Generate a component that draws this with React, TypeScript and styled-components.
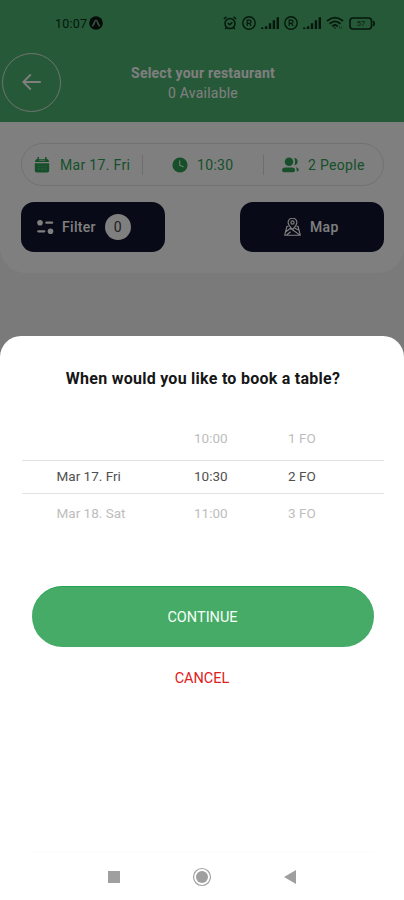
import React from 'react';
import styled, { createGlobalStyle } from 'styled-components';

const GlobalStyle = createGlobalStyle`
  * { box-sizing: border-box; }
  body { margin: 0; background: #fff; font-family: Roboto, "Liberation Sans", sans-serif; }
  button { font: inherit; border: 0; padding: 0; }
  svg { display: block; flex: none; }
`;

const Screen = styled.main`
  position: relative;
  width: 404px;
  height: 900px;
  overflow: hidden;
  background: #f4f4f4;
`;

const Header = styled.header`
  height: 122px;
  background: #4cb270;
`;

const StatusBar = styled.div`
  display: flex;
  align-items: center;
  justify-content: space-between;
  height: 46px;
  padding: 0 28px 0 55px;
  color: #0b2f18;
`;

const Clock = styled.div`
  display: flex;
  align-items: center;
  gap: 2px;
  font-size: 12.5px;
  letter-spacing: 0.2px;
`;

const StatusIcons = styled.div`
  display: flex;
  align-items: center;
  gap: 5px;
`;

const TitleRow = styled.div`
  display: grid;
  grid-template-columns: 58px 1fr 58px;
  align-items: center;
  height: 74px;
  padding: 0 0 2px 2px;
`;

const BackButton = styled.button`
  display: flex;
  align-items: center;
  justify-content: center;
  width: 59px;
  height: 59px;
  border: 1px solid #dcebdc;
  border-radius: 50%;
  background: transparent;
  color: #fff;
`;

const Heading = styled.div`
  display: flex;
  flex-direction: column;
  align-items: center;
  color: #fff;
  font-size: 14px;
  line-height: 20px;
  letter-spacing: 0.22px;
  white-space: nowrap;
`;

const Title = styled.h1`
  margin: 2px 0 0;
  font-size: 14px;
  font-weight: 700;
  line-height: 20px;
`;

const SearchCard = styled.section`
  display: flex;
  flex-direction: column;
  gap: 16px;
  height: 151px;
  padding: 21px 20px 0 21px;
  border-radius: 0 0 26px 26px;
  background: #fff;
`;

const Criteria = styled.div`
  display: flex;
  align-items: center;
  height: 43px;
  border: 1px solid #e2e2e2;
  border-radius: 22px;
  color: #2c9f55;
`;

const Criterion = styled.div<{ $width: number; $inset: number; $gap: number }>`
  display: flex;
  align-items: center;
  gap: ${(p) => p.$gap}px;
  width: ${(p) => p.$width}px;
  height: 20px;
  padding-left: ${(p) => p.$inset}px;
  font-size: 14px;
  letter-spacing: 0.32px;
  white-space: nowrap;
  & + & { border-left: 1px solid #dcdcdc; }
`;

const Actions = styled.div`
  display: flex;
  justify-content: space-between;
`;

const ActionButton = styled.button<{ $inset: number; $gap: number }>`
  display: flex;
  align-items: center;
  gap: ${(p) => p.$gap}px;
  width: 144px;
  height: 50px;
  padding-left: ${(p) => p.$inset}px;
  border-radius: 13px;
  background: #12142e;
  color: #fff;
  font-size: 14px;
  font-weight: 500;
  letter-spacing: 0.3px;
`;

const Count = styled.span`
  display: flex;
  align-items: center;
  justify-content: center;
  width: 26px;
  height: 26px;
  margin-left: 1px;
  border-radius: 50%;
  background: #fff;
  color: #444;
  font-weight: 400;
`;

const Scrim = styled.div`
  position: absolute;
  inset: 0;
  background: rgba(0, 0, 0, 0.5);
`;

const Sheet = styled.section`
  position: absolute;
  inset: 336px 0 0;
  display: flex;
  flex-direction: column;
  align-items: center;
  border-radius: 21px 21px 0 0;
  background: #fff;
`;

const Question = styled.h2`
  margin: 33px 0 33px 2px;
  color: #161616;
  font-size: 16px;
  font-weight: 700;
  line-height: 20px;
  letter-spacing: 0.26px;
  white-space: nowrap;
`;

const Picker = styled.div`
  display: flex;
  flex-direction: column;
  width: 362px;
  margin-left: 1px;
`;

const PickerRow = styled.div<{ $selected?: boolean }>`
  display: grid;
  grid-template-columns: 137.5px 94px 1fr;
  align-items: center;
  height: ${(p) => (p.$selected ? 34 : 38)}px;
  padding-left: 35px;
  padding-bottom: ${(p) => (p.$selected ? 3 : 0)}px;
  border: solid #e2e2e2;
  border-width: ${(p) => (p.$selected ? '1px 0' : '0')};
  color: ${(p) => (p.$selected ? '#505050' : '#bdbdbd')};
  font-size: 13.5px;
  white-space: nowrap;
  &:first-child { padding-bottom: 6px; }
`;

const ContinueButton = styled.button`
  width: 342px;
  height: 61px;
  margin-top: 54px;
  margin-left: 1px;
  border-radius: 31px;
  background: #47ab68;
  border-top: 1px solid #22a253;
  color: #f5fff7;
  font-size: 14.5px;
`;

const CancelButton = styled.button`
  margin-top: 22px;
  background: transparent;
  color: #df2020;
  font-size: 14.5px;
  line-height: 20px;
`;

const NavigationBar = styled.nav`
  display: flex;
  justify-content: space-between;
  align-items: center;
  width: 342px;
  height: 48px;
  margin-top: auto;
  padding: 0 77px;
  border-top: 1px solid #fcfcfc;
`;

function AppBadge() {
  return (
    <svg width="14" height="14" viewBox="0 0 14 14">
      <circle cx="7" cy="7" r="6.8" fill="#06180c" />
      <path d="M3.7 9.7C5.2 8.1 5.5 4.3 7 4.3s1.8 3.8 3.3 5.4" fill="none" stroke="#78a282" strokeWidth="1.6" strokeLinecap="round" />
    </svg>
  );
}

function Alarm() {
  return (
    <svg width="14" height="14" viewBox="0 0 14 14" fill="none" stroke="currentColor" strokeWidth="1.5">
      <circle cx="7" cy="7.6" r="5" />
      <path d="M.8 3 3.5.9M13.2 3 10.5.9M4.8 7.1l2 1.7 2.6-2.5M3.2 11.8l-1 1.3M10.8 11.8l1 1.3" />
    </svg>
  );
}

function Registered() {
  return (
    <svg width="14" height="14" viewBox="0 0 14 14" fill="none" stroke="currentColor">
      <circle cx="7" cy="7" r="6.2" strokeWidth="1.4" />
      <path d="M5.2 10V4.2h2.1q1.8 0 1.8 1.5T7.3 7.3H5.2m2.2 0L9.2 10" strokeWidth="1.2" />
    </svg>
  );
}

function Signal() {
  return (
    <svg width="18" height="12" viewBox="0 0 18 12" stroke="currentColor" strokeWidth="2.4">
      <path d="M1.2 12v-1.5M5.1 12V9.3M9 12V6.3M12.9 12V3.3M16.8 12V.3" />
    </svg>
  );
}

function Wifi() {
  return (
    <svg width="18" height="14" viewBox="0 0 18 14" fill="none" stroke="currentColor" strokeWidth="1.8">
      <path d="M1 5Q9-1.8 17 5M3.6 7.7q5.4-4.6 10.8 0M6.2 10.3q2.8-2.5 5.6 0" />
      <path d="m7.5 11.5 1.5 1.6 1.4-1.6z" fill="currentColor" stroke="none" />
      <path d="M13.5 10.5v2.2M15.5 10.5v2.2" strokeWidth=".8" opacity=".7" />
    </svg>
  );
}

function Battery() {
  return (
    <svg width="27" height="13" viewBox="0 0 27 13">
      <rect x="1" y="1" width="21.5" height="11" rx="3" fill="none" stroke="currentColor" strokeWidth="1.6" />
      <path d="M24 4q2.4 2.4 0 5" fill="none" stroke="currentColor" strokeWidth="1.7" />
      <text x="12" y="9.2" textAnchor="middle" fontSize="7.5" fontWeight="500" fill="currentColor" opacity=".75">57</text>
    </svg>
  );
}

function BackArrow() {
  return (
    <svg width="20" height="18" viewBox="0 0 20 18" fill="none" stroke="currentColor" strokeWidth="1.8">
      <path d="M18.8 9H.8M8.8 1.5 1.3 9l7.5 7.5" />
    </svg>
  );
}

function CalendarIcon() {
  return (
    <svg width="16" height="16" viewBox="0 0 16 16" fill="currentColor">
      <path d="M.8 6.2h14.4v7.2a2 2 0 0 1-2 2H2.8a2 2 0 0 1-2-2zM1 5q0-3 2.5-3h9Q15 2 15 5z" />
      <path d="M4.2.5v3M11.8.5v3" stroke="currentColor" strokeWidth="1.5" strokeLinecap="round" />
      <path d="M5.2 3.2h5.6" stroke="#b9e3c6" strokeWidth="1.2" />
      <path d="M4 9.3h1.6M7.2 9.3h1.6M10.4 9.3H12M4 12h1.6M7.2 12h1.6M10.4 12H12" stroke="#6dbf89" strokeWidth="1" />
    </svg>
  );
}

function TimeIcon() {
  return (
    <svg width="16" height="16" viewBox="0 0 16 16">
      <circle cx="8" cy="8" r="7.6" fill="currentColor" />
      <path d="M7.7 4v4.3l3.4 1.4" fill="none" stroke="#c7edd2" strokeWidth="1.3" strokeLinecap="round" />
    </svg>
  );
}

function PeopleIcon() {
  return (
    <svg width="17" height="16" viewBox="0 0 17 16" fill="currentColor">
      <circle cx="7" cy="4.7" r="4.3" />
      <path d="M0 13q0-2.6 3.5-2.6h6.2q3.4 0 3.4 2.6 0 2.2-2 2.2H2Q0 15.2 0 13M12 1q3.7.4 3.7 3.6 0 3.2-3.4 3.8 1.8-3.7-.3-7.4M13.8 10.2q3 .7 3 2.9 0 1.4-2.1 1.5.4-2.7-.9-4.4" />
    </svg>
  );
}

function FilterIcon() {
  return (
    <svg width="17" height="16" viewBox="0 0 17 16" fill="none" stroke="currentColor" strokeWidth="2.3" strokeLinecap="round">
      <circle cx="3" cy="3.7" r="2.8" fill="currentColor" stroke="none" />
      <path d="M9.4 3.7h5.7M1.3 12.3h6" />
      <circle cx="13.5" cy="12.3" r="2.8" fill="currentColor" stroke="none" />
    </svg>
  );
}

function MapIcon() {
  return (
    <svg width="17" height="18" viewBox="0 0 17 18" fill="none" stroke="currentColor" strokeWidth="1.15" strokeLinejoin="round">
      <path d="M8.5 11.7C6 8.5 4.1 6.8 4.1 4.5a4.4 4.4 0 0 1 8.8 0c0 2.3-1.9 4-4.4 7.2Z" />
      <circle cx="8.5" cy="4.5" r="1.6" />
      <path d="M4.6 8.2H3L.7 17.2h15.6L14 8.2h-1.6M1.5 14l5-3.8 9.1 6.7M10.5 10l4.3 2M2.6 17l4-3.3" />
    </svg>
  );
}

const slots = [
  { date: '', time: '10:00', party: '1 FO' },
  { date: 'Mar 17. Fri', time: '10:30', party: '2 FO' },
  { date: 'Mar 18. Sat', time: '11:00', party: '3 FO' },
];

export default function App() {
  return (
    <>
      <GlobalStyle />
      <Screen>
        <Header>
          <StatusBar>
            <Clock>10:07<AppBadge /></Clock>
            <StatusIcons>
              <Alarm /><Registered /><Signal /><Registered /><Signal /><Wifi /><Battery />
            </StatusIcons>
          </StatusBar>
          <TitleRow>
            <BackButton aria-label="Back"><BackArrow /></BackButton>
            <Heading>
              <Title>Select your restaurant</Title>
              <span>0 Available</span>
            </Heading>
          </TitleRow>
        </Header>
        <SearchCard>
          <Criteria>
            <Criterion $width={120} $inset={12} $gap={10}><CalendarIcon />Mar 17. Fri</Criterion>
            <Criterion $width={121} $inset={29} $gap={9}><TimeIcon />10:30</Criterion>
            <Criterion $width={119} $inset={18} $gap={9}><PeopleIcon />2 People</Criterion>
          </Criteria>
          <Actions>
            <ActionButton $inset={16} $gap={8}><FilterIcon />Filter<Count>0</Count></ActionButton>
            <ActionButton $inset={44} $gap={9}><MapIcon />Map</ActionButton>
          </Actions>
        </SearchCard>
        <Scrim />
        <Sheet role="dialog">
          <Question>When would you like to book a table?</Question>
          <Picker>
            {slots.map((slot, index) => (
              <PickerRow key={slot.time} $selected={index === 1}>
                <span>{slot.date}</span>
                <span>{slot.time}</span>
                <span>{slot.party}</span>
              </PickerRow>
            ))}
          </Picker>
          <ContinueButton>CONTINUE</ContinueButton>
          <CancelButton>CANCEL</CancelButton>
          <NavigationBar>
            <svg width="12" height="12" viewBox="0 0 12 12"><rect width="12" height="12" fill="#9f9f9f" /></svg>
            <svg width="20" height="20" viewBox="0 0 20 20">
              <circle cx="10" cy="10" r="8.5" fill="none" stroke="#a1a1a1" strokeWidth="1.2" />
              <circle cx="10" cy="10" r="6" fill="#9f9f9f" />
            </svg>
            <svg width="12" height="14" viewBox="0 0 12 14"><path d="M12 0v14L0 7z" fill="#9f9f9f" /></svg>
          </NavigationBar>
        </Sheet>
      </Screen>
    </>
  );
}
